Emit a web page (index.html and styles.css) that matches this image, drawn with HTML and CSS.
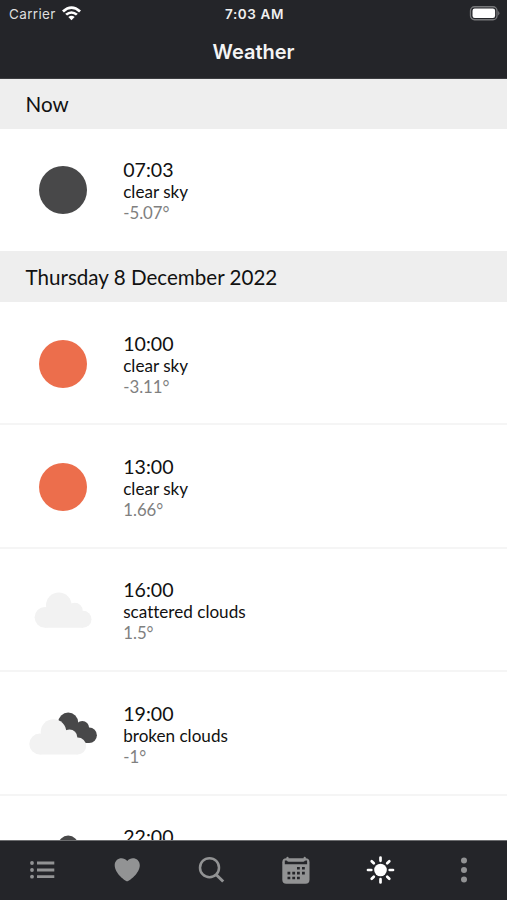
FILE: index.html
```html
<!DOCTYPE html>
<html lang="en">
<head>
<meta charset="utf-8">
<title>Weather</title>
<link rel="stylesheet" href="styles.css">
</head>
<body>
<div class="app">
  <header class="header">
    <div class="status">
      <div class="carrier">
        <span>Carrier</span>
        <svg class="wifi" width="19" height="15" viewBox="0 0 18 14" fill="#fff"><path d="M0 4.2Q9-3.8 18 4.2L16.2 6Q9-.3 1.800 6Z"/><path d="M3 7.200Q9 2.300 15 7.200L13.200 9Q9 5.600 4.800 9Z"/><path d="M6 10.300Q9 8 12 10.300L9 13.300Z"/></svg>
      </div>
      <span class="clock">7:03 AM</span>
      <svg class="battery" width="31" height="15" viewBox="0 0 31 15"><rect x="1.500" y=".75" width="26.500" height="13" rx="4" fill="none" stroke="#77787a" stroke-width="1.300"/><rect x="3.500" y="2.600" width="22.600" height="9.300" rx="2.200" fill="#fff"/><path d="M29.200 5Q31.600 7.200 29.200 9.500Z" fill="#77787a"/></svg>
    </div>
    <h1 class="title">Weather</h1>
  </header>
  <main class="list">
    <h2 class="section now">Now</h2>
    <article class="row first">
      <svg class="icon" viewBox="0 0 76 60"><circle cx="38" cy="30" r="24" fill="#484849"/></svg>
      <div class="info"><div class="time">07:03</div><div class="desc">clear sky</div><div class="temp">-5.07°</div></div>
    </article>
    <h2 class="section">Thursday 8 December 2022</h2>
    <article class="row">
      <svg class="icon" viewBox="0 0 76 60"><circle cx="38" cy="30" r="24" fill="#ec6e4c"/></svg>
      <div class="info"><div class="time">10:00</div><div class="desc">clear sky</div><div class="temp">-3.11°</div></div>
    </article>
    <article class="row">
      <svg class="icon" viewBox="0 0 76 60"><circle cx="38" cy="30" r="24" fill="#ec6e4c"/></svg>
      <div class="info"><div class="time">13:00</div><div class="desc">clear sky</div><div class="temp">1.66°</div></div>
    </article>
    <article class="row">
      <svg class="icon" viewBox="0 0 76 60">
        <g id="cloud" fill="#f2f2f2"><circle cx="20" cy="37.300" r="10.400"/><circle cx="33.800" cy="25.300" r="12.800"/><circle cx="49.800" cy="30.500" r="7.800"/><circle cx="58" cy="39.200" r="8.500"/><path d="M20 28H50L58 34V47.700H20Z"/></g>
      </svg>
      <div class="info"><div class="time">16:00</div><div class="desc">scattered clouds</div><div class="temp">1.5°</div></div>
    </article>
    <article class="row">
      <svg class="icon" viewBox="0 0 76 60"><use href="#broken"/></svg>
      <div class="info"><div class="time">19:00</div><div class="desc">broken clouds</div><div class="temp">-1°</div></div>
    </article>
    <article class="row">
      <svg class="icon" viewBox="0 0 76 60">
        <g id="broken"><g fill="#484849"><circle cx="43.200" cy="18.500" r="10"/><circle cx="57.300" cy="23.800" r="6.800"/><circle cx="64.200" cy="31.300" r="7.700"/><path d="M43 20H56L64 36V39H52Z"/></g><use href="#cloud" transform="translate(-5.300 2.700)"/></g>
      </svg>
      <div class="info"><div class="time">22:00</div></div>
    </article>
  </main>
  <nav class="tabs">
    <a class="tab"><svg viewBox="0 0 30 30" fill="currentColor"><circle cx="5" cy="8" r="1.900"/><circle cx="5" cy="15" r="1.900"/><circle cx="5" cy="21.700" r="1.900"/><path d="M10 6.600h17.300v2.800H10zM10 13.600h17.300v2.800H10zM10 20.300h17.300v2.800H10z"/></svg></a>
    <a class="tab"><svg viewBox="0 0 30 30" fill="currentColor"><path d="M15.200 26.300C13.500 26.300 2.700 18.500 2.700 10.300C2.700 3.300 11 .8 15.200 6C19.400 .8 27.800 3.300 27.800 10.300C27.800 18.500 17 26.300 15.200 26.300Z"/></svg></a>
    <a class="tab"><svg viewBox="0 0 30 30" fill="none" stroke="currentColor" stroke-width="2.500"><circle cx="13.500" cy="12.700" r="9.500"/><path d="M20 19.500L27.200 26.500" stroke-width="3"/></svg></a>
    <a class="tab"><svg viewBox="0 0 30 30"><rect x="1.300" y="3.300" width="27.200" height="25.400" rx="4" fill="currentColor"/><path class="cut" d="M3.800 5.500h2.300a1.500 1.500 0 0 0 1.500 1.300h14.600a1.500 1.500 0 0 0 1.500-1.300h2.400v3.700H3.800zM16 12h2.800v2.600H16zM21 12h2.800v2.600H21zM6.500 16.800h2.800v2.600H6.500zM11.300 16.800h2.800v2.600h-2.800zM16 16.800h2.800v2.600H16zM21 16.800h2.800v2.600H21zM6.500 21.700h2.800v2.600H6.500zM11.300 21.700h2.800v2.600h-2.800zM16 21.700h2.800v2.600H16z"/><path d="M6.500 2.800v1.800M23.700 2.800v1.800" stroke="currentColor" stroke-width="2.200" stroke-linecap="round"/></svg></a>
    <a class="tab active"><svg viewBox="0 0 30 30"><circle cx="15.500" cy="15" r="6.300" fill="currentColor"/><path d="M15.500 2.500v3.300M15.500 24.200v3.300M3 15h3.300M24.700 15H28M6.700 6.200L8.800 8.300M22.200 21.700l2.100 2.100M6.700 23.800l2.100-2.100M22.200 8.300l2.100-2.100" stroke="currentColor" stroke-width="2.700" stroke-linecap="round"/></svg></a>
    <a class="tab"><svg viewBox="0 0 30 30" fill="currentColor"><circle cx="14" cy="5.400" r="3"/><circle cx="14" cy="15" r="3"/><circle cx="14" cy="24.600" r="3"/></svg></a>
  </nav>
</div>
</body>
</html>
```
FILE: styles.css
```css
* { box-sizing: border-box; }
body { margin: 0; background: #fff; }
.app {
  height: 900px;
  display: flex;
  flex-direction: column;
  overflow: hidden;
  font-family: Lato, sans-serif;
  font-variant-ligatures: none;
  color: #111;
}
.header {
  flex: none;
  height: 79px;
  background: #242529;
  border-bottom: 1px solid #3c3d40;
  color: #fff;
  font-family: Inter, sans-serif;
}
.status {
  height: 27px;
  padding: 0 7px 0 9px;
  display: grid;
  grid-template-columns: 1fr auto 1fr;
  align-items: center;
}
.carrier { display: flex; align-items: center; gap: 6px; font-size: 13.500px; color: #dedede; letter-spacing: .35px; }
.clock { font-size: 13.500px; font-weight: 600; color: #f0f0f0; letter-spacing: .6px; }
.battery { justify-self: end; }
.title { margin: 0; font-size: 20px; line-height: 51px; font-weight: 600; text-align: center; color: #f4f4f4; }
.list { flex: 1; min-height: 0; overflow: hidden; }
.section {
  margin: 0;
  height: 51px;
  padding-left: 25.500px;
  background: #eee;
  font-size: 20.600px;
  font-weight: 400;
  line-height: 53px;
}
.section.now { height: 49.500px; line-height: 51px; }
.row {
  height: 123.400px;
  padding: 1px 0 0 24.500px;
  display: flex;
  align-items: flex-start;
  border-bottom: 2px solid #f5f5f5;
}
.row.first { height: 122.500px; border-bottom: 0; }
.icon { width: 76px; height: 60px; flex: none; margin-top: 30.500px; }
.info { margin: 28.500px 0 0 22.700px; }
.time { font-size: 19.600px; line-height: 23px; }
.desc { font-size: 17.100px; line-height: 21px; }
.temp { font-size: 16.800px; line-height: 21px; color: #808080; }
.tabs {
  flex: none;
  height: 60px;
  padding-bottom: 1px;
  display: grid;
  grid-template-columns: repeat(6, 1fr);
  background: #242529;
  border-top: 1px solid #6c6d6f;
}
.tab { display: flex; align-items: center; justify-content: center; color: #929394; }
.tab svg { width: 30px; height: 30px; }
.tab.active { color: #fff; }
.cut { fill: #242529; }
```
